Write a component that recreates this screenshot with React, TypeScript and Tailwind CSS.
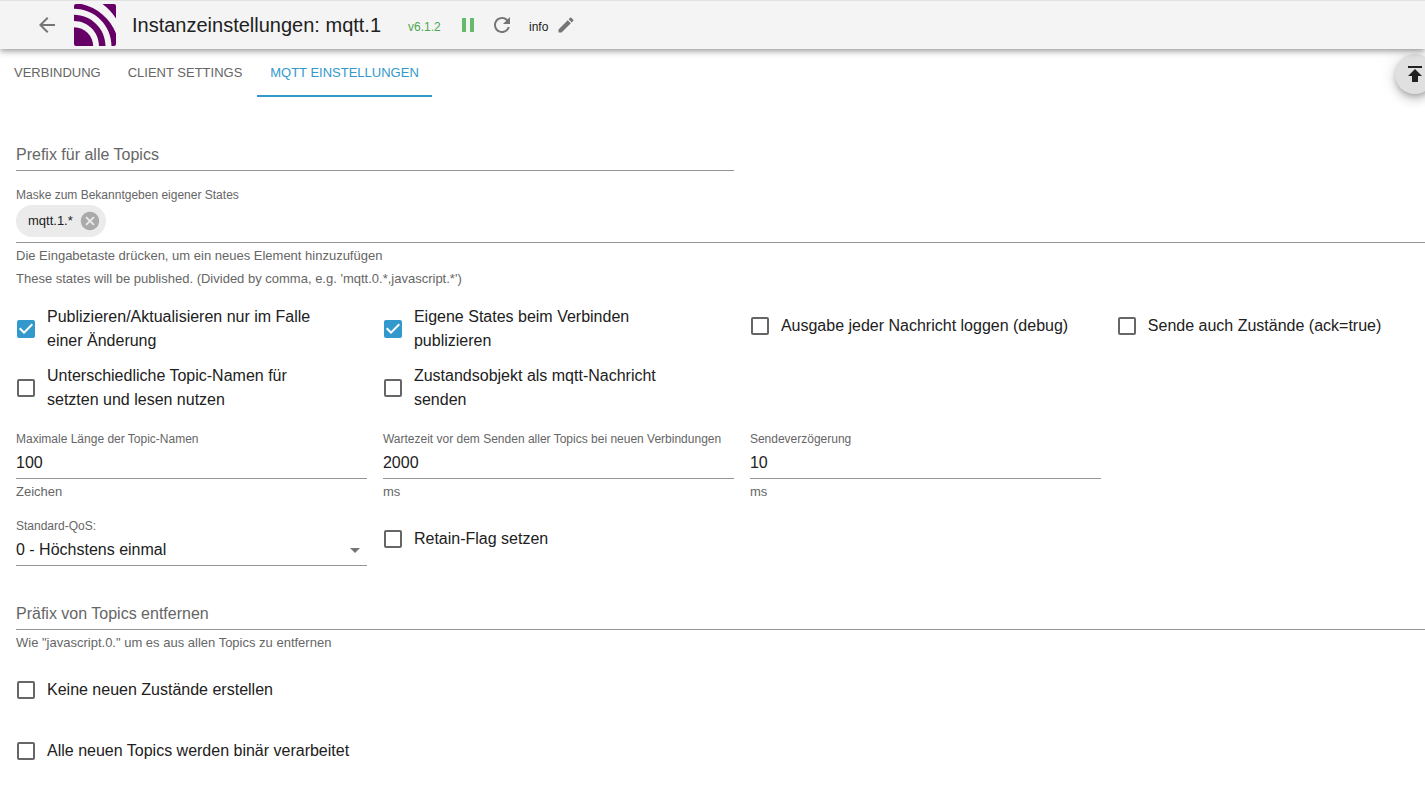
import type { ReactNode } from "react";
import {
  MdArrowBack,
  MdArrowDropDown,
  MdCancel,
  MdEdit,
  MdPause,
  MdPublish,
  MdRefresh,
} from "react-icons/md";

function MqttLogo() {
  return (
    <svg viewBox="0 0 42 42" className="h-[42px] w-[42px]" aria-hidden="true">
      <path d="M0 23.2C10.5 23.2 19 31.500 19.200 42H2a2 2 0 0 1-2-2z" fill="#660066" />
      <path d="M0 10.700C17.300 10.700 31.400 24.700 31.500 42H25C25 28.200 13.800 17 0 17z" fill="#660066" />
      <path d="M0 2a2 2 0 0 1 2-2h5.500C23.500 3.500 36.500 15 42 29.500V40a2 2 0 0 1-2 2h-2.500C37.500 21.500 20.700 4.800 0 4.800z" fill="#660066" />
      <path d="M28.500 0H40a2 2 0 0 1 2 2v12.500C38.500 9 34 4 28.500 0z" fill="#660066" />
    </svg>
  );
}

function Helper({ children }: { children: ReactNode }) {
  return <p className="pt-[3px] text-[13px] leading-5 text-[#666]">{children}</p>;
}

function Field({
  id,
  label,
  value,
  helper,
}: {
  id: string;
  label: string;
  value: string;
  helper: string;
}) {
  return (
    <div className="flex flex-col">
      <label htmlFor={id} className="h-4 text-xs leading-4 whitespace-nowrap text-[#666]">
        {label}
      </label>
      <input
        id={id}
        type="text"
        defaultValue={value}
        className="h-8 w-full border-b border-[#949494] text-base text-[#212121] outline-none"
      />
      <Helper>{helper}</Helper>
    </div>
  );
}

function EmptyField({ id, label }: { id: string; label: string }) {
  return (
    <div className="grid h-8 items-center border-b border-[#949494]">
      <label htmlFor={id} className="col-start-1 row-start-1 text-base leading-6 text-[#666]">
        {label}
      </label>
      <input id={id} type="text" className="col-start-1 row-start-1 h-6 w-full bg-transparent outline-none" />
    </div>
  );
}

function Check({ checked = false, children }: { checked?: boolean; children: ReactNode }) {
  return (
    <label className="flex min-h-[42px] items-center gap-3 self-start pr-7 pl-px text-base leading-6 text-[#212121]">
      <span className="grid h-[18px] w-[18px] shrink-0 place-items-center">
        <input
          type="checkbox"
          defaultChecked={checked}
          className="peer col-start-1 row-start-1 h-[18px] w-[18px] appearance-none rounded-xs border-2 border-[#666] checked:border-[#3399cc] checked:bg-[#3399cc]"
        />
        <svg
          viewBox="3 3 18 18"
          className="pointer-events-none col-start-1 row-start-1 hidden h-[18px] w-[18px] fill-white peer-checked:block"
          aria-hidden="true"
        >
          <path d="M10 17l-5-5 1.410-1.410L10 14.170l7.590-7.590L19 8z" />
        </svg>
      </span>
      <span>{children}</span>
    </label>
  );
}

export default function App() {
  return (
    <div className="min-h-screen overflow-x-hidden bg-white font-['Liberation_Sans',Arial,sans-serif] text-[#212121]">
      <header className="relative z-10 flex h-[49px] items-center border-t border-[#e2e2e2] bg-[#f4f4f4] pl-[35px] shadow-[0_2px_4px_-1px_rgba(0,0,0,0.2),0_4px_5px_0_rgba(0,0,0,0.14),0_1px_10px_0_rgba(0,0,0,0.12)]">
        <button type="button" aria-label="Zurück" className="text-[#757575]">
          <MdArrowBack size={24} />
        </button>
        <div className="pl-[15px]">
          <MqttLogo />
        </div>
        <h1 className="w-[292px] pl-4 text-xl font-normal whitespace-nowrap">Instanzeinstellungen: mqtt.1</h1>
        <span className="w-12 pt-1 text-xs text-[#4ca650]">v6.1.2</span>
        <button type="button" aria-label="Pause" className="text-[#66bb6a]">
          <MdPause size={24} />
        </button>
        <button type="button" aria-label="Neu laden" className="pl-[10px] text-[#757575]">
          <MdRefresh size={24} />
        </button>
        <span className="w-[42px] pt-1 pl-[15px] text-xs">info</span>
        <button type="button" aria-label="Bearbeiten" className="text-[#757575]">
          <MdEdit size={20} />
        </button>
      </header>

      <div className="relative">
        <nav className="flex h-12 text-[13px] text-[#666]">
          <button type="button" className="w-[113px] pl-[14px] text-left uppercase">
            Verbindung
          </button>
          <button type="button" className="w-36 uppercase">
            Client Settings
          </button>
          <button type="button" className="w-[175px] border-b-2 border-[#3399cc] pt-0.5 text-[#3399cc] uppercase">
            MQTT Einstellungen
          </button>
        </nav>
        <button
          type="button"
          aria-label="Hochladen"
          className="absolute top-[5px] -right-2.5 flex h-10 w-10 items-center justify-center rounded-full bg-[#e0e0e0] text-[#212121] shadow-[0_3px_5px_-1px_rgba(0,0,0,0.2),0_6px_10px_0_rgba(0,0,0,0.14),0_1px_18px_0_rgba(0,0,0,0.12)]"
        >
          <MdPublish size={24} />
        </button>
      </div>

      <main className="w-[103%] pt-[42px] pl-4">
        <div className="grid grid-cols-4 gap-x-4">
          <div className="col-span-2">
            <EmptyField id="prefix" label="Prefix für alle Topics" />
          </div>
        </div>

        <section className="pt-4">
          <label htmlFor="mask" className="block h-4 text-xs leading-4 text-[#666]">
            Maske zum Bekanntgeben eigener States
          </label>
          <div className="flex h-10 items-start gap-2 border-b border-[#949494] pt-0.5">
            <span className="flex h-8 items-center gap-[6px] rounded-full bg-[#ebebeb] pr-[5px] pl-3 text-[13px]">
              mqtt.1.*
              <button type="button" aria-label="Entfernen" className="text-[#aaa]">
                <MdCancel size={22} />
              </button>
            </span>
            <input id="mask" type="text" className="h-8 flex-1 outline-none" />
          </div>
          <Helper>Die Eingabetaste drücken, um ein neues Element hinzuzufügen</Helper>
          <Helper>These states will be published. (Divided by comma, e.g. 'mqtt.0.*,javascript.*')</Helper>
        </section>

        <section className="grid grid-cols-4 gap-x-4 gap-y-[11px] pt-4">
          <Check checked>Publizieren/Aktualisieren nur im Falle einer Änderung</Check>
          <Check checked>Eigene States beim Verbinden publizieren</Check>
          <Check>Ausgabe jeder Nachricht loggen (debug)</Check>
          <Check>Sende auch Zustände (ack=true)</Check>
          <Check>Unterschiedliche Topic-Namen für setzten und lesen nutzen</Check>
          <Check>Zustandsobjekt als mqtt-Nachricht senden</Check>
        </section>

        <section className="grid grid-cols-4 gap-x-4 pt-[19px]">
          <Field id="max" label="Maximale Länge der Topic-Namen" value="100" helper="Zeichen" />
          <Field
            id="wait"
            label="Wartezeit vor dem Senden aller Topics bei neuen Verbindungen"
            value="2000"
            helper="ms"
          />
          <Field id="delay" label="Sendeverzögerung" value="10" helper="ms" />
        </section>

        <section className="grid grid-cols-4 gap-x-4 pt-4">
          <div className="flex flex-col">
            <label htmlFor="qos" className="h-4 text-xs leading-4 text-[#666]">
              Standard-QoS:
            </label>
            <div className="grid h-8 items-center border-b border-[#949494]">
              <select
                id="qos"
                className="col-start-1 row-start-1 h-8 w-full appearance-none bg-transparent text-base outline-none"
              >
                <option>0 - Höchstens einmal</option>
              </select>
              <MdArrowDropDown
                size={24}
                className="pointer-events-none col-start-1 row-start-1 justify-self-end text-[#757575]"
              />
            </div>
          </div>
          <Check>Retain-Flag setzen</Check>
        </section>

        <section className="pt-8">
          <EmptyField id="remove-prefix" label="Präfix von Topics entfernen" />
          <Helper>Wie "javascript.0." um es aus allen Topics zu entfernen</Helper>
        </section>

        <section className="flex flex-col gap-[19px] pt-4">
          <Check>Keine neuen Zustände erstellen</Check>
          <Check>Alle neuen Topics werden binär verarbeitet</Check>
        </section>
      </main>
    </div>
  );
}
